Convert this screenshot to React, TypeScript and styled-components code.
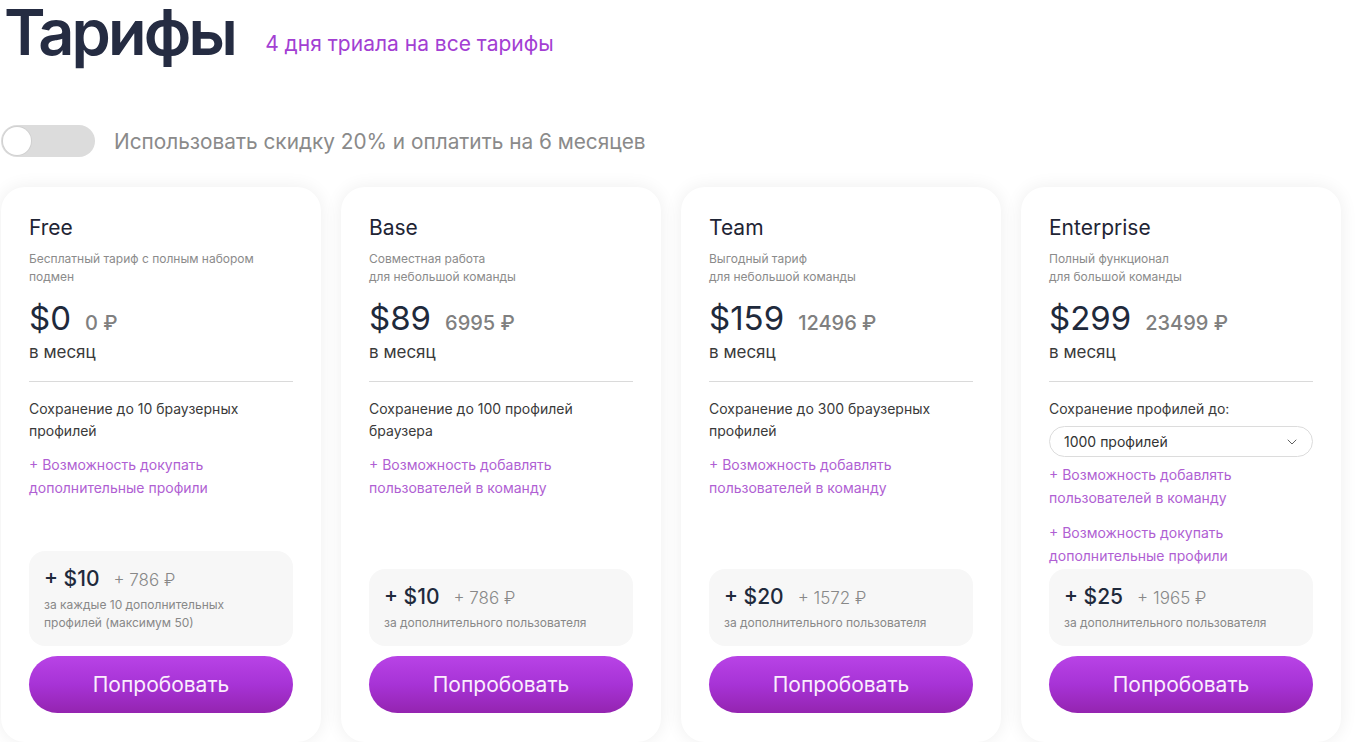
import React, { useState } from 'react';
import styled, { createGlobalStyle } from 'styled-components';
import { ChevronDown } from 'lucide-react';

const GlobalStyle = createGlobalStyle`
    body {
        margin: 0;
        background: #ffffff;
        font-family: Inter, "Noto Sans", "Liberation Sans", sans-serif;
        color: #252c42;
    }
`;

const Page = styled.div`
    padding: 0 0 0 1px;
`;

const Header = styled.div`
    display: flex;
    align-items: baseline;
    gap: 30px;
    padding-left: 3px;
`;

const Title = styled.h1`
    margin: 0;
    font-size: 63px;
    line-height: 64px;
    font-weight: 600;
    color: #252c42;
    letter-spacing: -2.8px;
`;

const Trial = styled.span`
    font-size: 21px;
    color: #a33fd3;
    transform: translateY(-4px);
`;

const DiscountRow = styled.label`
    display: flex;
    align-items: center;
    gap: 19px;
    margin-top: 61px;
    cursor: pointer;
`;

const Toggle = styled.span<{ $on: boolean }>`
    position: relative;
    width: 94px;
    height: 32px;
    border-radius: 16px;
    background: ${p => (p.$on ? '#b03fe0' : '#dcdcdc')};
    transition: background 0.2s;
    flex-shrink: 0;

    &::after {
        content: '';
        position: absolute;
        top: 2px;
        left: ${p => (p.$on ? '64px' : '2px')};
        width: 28px;
        height: 28px;
        border-radius: 50%;
        background: #fff;
        box-shadow: 0 0 0 1px #d0d0d0;
        transition: left 0.2s;
    }
`;

const DiscountText = styled.span`
    font-size: 20.8px;
    color: #8a8a8a;
`;

const Grid = styled.div`
    display: grid;
    grid-template-columns: repeat(4, 320px);
    gap: 20px;
    margin-top: 30px;
`;

const Card = styled.div`
    display: flex;
    flex-direction: column;
    background: #fff;
    border-radius: 24px;
    box-shadow: 0 0 18px rgba(0, 0, 0, 0.07);
    padding: 28px 28px 29px;
    min-height: 555px;
    box-sizing: border-box;
`;

const PlanName = styled.div`
    font-size: 21px;
    line-height: 26px;
    color: #1f2535;
`;

const PlanDesc = styled.div`
    margin-top: 9px;
    font-size: 12px;
    line-height: 18px;
    color: #8b8b8b;
    white-space: pre-line;
    min-height: 36px;
`;

const PriceRow = styled.div`
    display: flex;
    align-items: baseline;
    gap: 14px;
    margin-top: 12px;
    line-height: 40px;
`;

const Price = styled.span`
    font-size: 33px;
    color: #1f2a3c;
`;

const Rub = styled.span`
    font-size: 20px;
    font-weight: 500;
    color: #808080;
`;

const Period = styled.div`
    margin-top: -2px;
    font-size: 17px;
    line-height: 22px;
    color: #3a3a3a;
`;

const Divider = styled.hr`
    border: none;
    border-top: 1px solid #dadada;
    margin: 18px 0 0;
`;

const Feature = styled.div`
    margin-top: 16px;
    font-size: 14px;
    line-height: 22px;
    color: #3a3a3a;
`;

const Extra = styled.div<{ $gap: number }>`
    margin-top: ${p => p.$gap}px;
    font-size: 14px;
    line-height: 23px;
    color: #b05fd3;
`;

const Select = styled.div`
    display: flex;
    align-items: center;
    justify-content: space-between;
    margin-top: 6px;
    height: 31px;
    box-sizing: border-box;
    padding: 0 12px 0 14px;
    border: 1px solid #dcdcdc;
    border-radius: 16px;
    font-size: 14px;
    color: #333;
`;

const AddonBox = styled.div`
    margin-top: auto;
    background: #f7f7f7;
    border-radius: 16px;
    padding: 15px 15px 14px;
`;

const AddonPriceRow = styled.div`
    display: flex;
    align-items: baseline;
    gap: 14px;
    line-height: 26px;
`;

const AddonPrice = styled.span`
    font-size: 21px;
    font-weight: 500;
    color: #1f2a3c;
`;

const AddonRub = styled.span`
    font-size: 17px;
    font-weight: 300;
    color: #888;
`;

const AddonNote = styled.div`
    margin-top: 3px;
    font-size: 12px;
    line-height: 18px;
    color: #888;
    white-space: pre-line;
`;

const TryButton = styled.button`
    margin-top: 10px;
    height: 57px;
    border: none;
    border-radius: 29px;
    background: linear-gradient(180deg, #b843e6 0%, #a733d6 50%, #9424b0 100%);
    color: #fbeefd;
    font-family: inherit;
    font-size: 21px;
    cursor: pointer;
`;

type Plan = {
    name: string;
    desc: string;
    price: string;
    rub: string;
    feature?: string;
    extras: string[];
    addon: string;
    addonRub: string;
    addonNote: string;
    select?: boolean;
};

const plans: Plan[] = [
    {
        name: 'Free',
        desc: 'Бесплатный тариф с полным набором\nподмен',
        price: '$0',
        rub: '0 ₽',
        feature: 'Сохранение до 10 браузерных профилей',
        extras: ['+ Возможность докупать дополнительные профили'],
        addon: '+ $10',
        addonRub: '+ 786 ₽',
        addonNote: 'за каждые 10 дополнительных\nпрофилей (максимум 50)',
    },
    {
        name: 'Base',
        desc: 'Совместная работа\nдля небольшой команды',
        price: '$89',
        rub: '6995 ₽',
        feature: 'Сохранение до 100 профилей браузера',
        extras: ['+ Возможность добавлять пользователей в команду'],
        addon: '+ $10',
        addonRub: '+ 786 ₽',
        addonNote: 'за дополнительного пользователя',
    },
    {
        name: 'Team',
        desc: 'Выгодный тариф\nдля небольшой команды',
        price: '$159',
        rub: '12496 ₽',
        feature: 'Сохранение до 300 браузерных профилей',
        extras: ['+ Возможность добавлять пользователей в команду'],
        addon: '+ $20',
        addonRub: '+ 1572 ₽',
        addonNote: 'за дополнительного пользователя',
    },
    {
        name: 'Enterprise',
        desc: 'Полный функционал\nдля большой команды',
        price: '$299',
        rub: '23499 ₽',
        feature: 'Сохранение профилей до:',
        select: true,
        extras: [
            '+ Возможность добавлять пользователей в команду',
            '+ Возможность докупать дополнительные профили',
        ],
        addon: '+ $25',
        addonRub: '+ 1965 ₽',
        addonNote: 'за дополнительного пользователя',
    },
];

const App = () => {
    const [discount, setDiscount] = useState(false);

    return (
        <Page>
            <GlobalStyle />
            <Header>
                <Title>Тарифы</Title>
                <Trial>4 дня триала на все тарифы</Trial>
            </Header>
            <DiscountRow onClick={() => setDiscount(d => !d)}>
                <Toggle $on={discount} />
                <DiscountText>Использовать скидку 20% и оплатить на 6 месяцев</DiscountText>
            </DiscountRow>
            <Grid>
                {plans.map(plan => (
                    <Card key={plan.name}>
                        <PlanName>{plan.name}</PlanName>
                        <PlanDesc>{plan.desc}</PlanDesc>
                        <PriceRow>
                            <Price>{plan.price}</Price>
                            <Rub>{plan.rub}</Rub>
                        </PriceRow>
                        <Period>в месяц</Period>
                        <Divider />
                        <Feature>{plan.feature}</Feature>
                        {plan.select && (
                            <Select>
                                1000 профилей
                                <ChevronDown size={16} strokeWidth={1.4} color="#555" />
                            </Select>
                        )}
                        {plan.extras.map((text, i) => (
                            <Extra key={i} $gap={plan.select ? (i === 0 ? 6 : 12) : 11}>
                                {text}
                            </Extra>
                        ))}
                        <AddonBox>
                            <AddonPriceRow>
                                <AddonPrice>{plan.addon}</AddonPrice>
                                <AddonRub>{plan.addonRub}</AddonRub>
                            </AddonPriceRow>
                            <AddonNote>{plan.addonNote}</AddonNote>
                        </AddonBox>
                        <TryButton>Попробовать</TryButton>
                    </Card>
                ))}
            </Grid>
        </Page>
    );
};

export default App;
